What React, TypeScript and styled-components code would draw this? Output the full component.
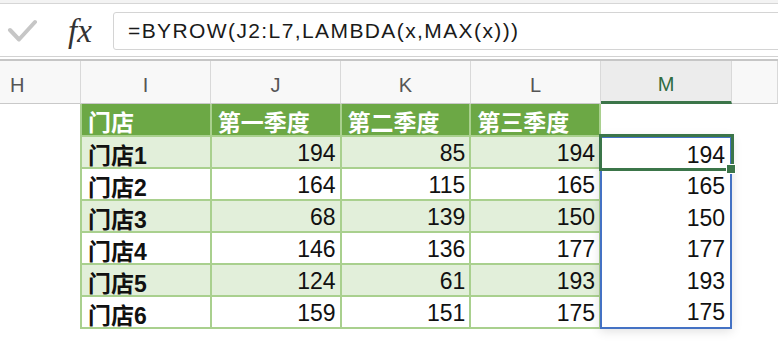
import React from "react";
import styled, { createGlobalStyle } from "styled-components";

const GlobalStyle = createGlobalStyle`
  html, body { margin: 0; padding: 0; background: #ffffff; }
  body { font-family: "Liberation Sans", "Noto Sans CJK SC", sans-serif; }
`;

const Page = styled.div`
  width: 778px;
  height: 362px;
  overflow: hidden;
  background: #ffffff;
`;

const TopStrip = styled.div`
  height: 3px;
  background: #f3f3f3;
  border-bottom: 1px solid #d6d6d6;
`;

const FormulaBar = styled.div`
  height: 52px;
  display: flex;
  align-items: flex-start;
  padding-top: 8px;
  box-sizing: border-box;
  background: #ffffff;
`;

const CheckButton = styled.div`
  width: 30px;
  height: 38px;
  margin-left: 7px;
  display: flex;
  align-items: center;
  justify-content: center;
`;

const FxLabel = styled.div`
  width: 45px;
  margin-left: 31px;
  height: 38px;
  display: flex;
  align-items: center;
  font-family: "Liberation Serif", "DejaVu Serif", serif;
  font-style: italic;
  font-size: 33px;
  color: #333333;
  letter-spacing: 0px;
`;

const FormulaInput = styled.div`
  flex: 1;
  height: 38px;
  margin-left: 0;
  margin-right: -10px;
  box-sizing: border-box;
  border: 1px solid #d4d4d4;
  border-radius: 3px;
  display: flex;
  align-items: center;
  padding-left: 14px;
  font-family: "Liberation Sans", "Noto Sans CJK SC", sans-serif;
  font-size: 21px;
  letter-spacing: 1.4px;
  color: #1a1a1a;
`;

const Divider = styled.div`
  height: 2px;
  border-top: 1px solid #d2d2d2;
  border-bottom: 2px solid #c6c6c6;
`;

const SheetGrid = styled.div`
  display: grid;
  grid-template-columns: 81px 130px 130px 130px 130px 131px 1fr;
  grid-template-rows: 43px auto;
`;

const ColHeader = styled.div<{ $active?: boolean; $align?: "left" | "center" }>`
  box-sizing: border-box;
  height: 43px;
  display: flex;
  align-items: center;
  justify-content: ${(p) => (p.$align === "left" ? "flex-start" : "center")};
  padding-left: ${(p) => (p.$align === "left" ? "10px" : "0")};
  padding-top: 7px;
  background: ${(p) => (p.$active ? "#ececec" : "#f8f8f8")};
  border-right: 1px solid #d9d9d9;
  border-bottom: ${(p) => (p.$active ? "3px solid #3b7549" : "1px solid #c9c9c9")};
  font-family: "Liberation Sans", sans-serif;
  font-size: 20px;
  color: ${(p) => (p.$active ? "#2f6b40" : "#555555")};
`;

const EmptyCell = styled.div``;

const DataTable = styled.div`
  grid-column: 2 / span 4;
  margin-left: -1px;
  display: grid;
  grid-template-columns: repeat(4, 1fr);
  grid-template-rows: 31px repeat(6, 30px);
  gap: 2px;
  padding: 0 2px 2px 2px;
  background: #a9d08e;
`;

const HeadCell = styled.div`
  background: #6ca845;
  color: #ffffff;
  font-weight: bold;
  font-size: 23px;
  display: flex;
  align-items: center;
  padding-left: 6px;
  padding-top: 2px;
  white-space: nowrap;
  overflow: hidden;
`;

const BodyCell = styled.div<{ $band: boolean; $num?: boolean }>`
  background: ${(p) => (p.$band ? "#e2efda" : "#ffffff")};
  color: #111111;
  font-size: 23px;
  font-weight: ${(p) => (p.$num ? "normal" : "bold")};
  display: flex;
  align-items: center;
  justify-content: ${(p) => (p.$num ? "flex-end" : "flex-start")};
  padding: 3px ${(p) => (p.$num ? "4px" : "0")} 0 ${(p) => (p.$num ? "0" : "6px")};
  white-space: nowrap;
`;

const MColumn = styled.div`
  margin-left: -1px;
  display: flex;
  flex-direction: column;
`;

const MTopSpacer = styled.div`
  height: 32px;
`;

const SpillBox = styled.div`
  position: relative;
  height: 193px;
  box-sizing: border-box;
  border: 2px solid #4472c4;
  box-shadow: 0 2px 10px rgba(0, 0, 0, 0.13);
  background: #ffffff;
  display: grid;
  grid-template-rows: repeat(6, 1fr);
`;

const SpillValue = styled.div`
  display: flex;
  align-items: center;
  justify-content: flex-end;
  padding-right: 5px;
  padding-top: 3px;
  font-size: 23px;
  color: #111111;
`;

const Selection = styled.div`
  position: absolute;
  left: -3px;
  top: -4px;
  width: 135px;
  height: 37px;
  box-sizing: border-box;
  border: 3px solid #3b7549;
  pointer-events: none;
`;

const FillHandle = styled.div`
  position: absolute;
  left: 124px;
  top: 26px;
  width: 10px;
  height: 10px;
  box-sizing: border-box;
  border: 1px solid #ffffff;
  background: #3b7549;
`;

const CheckIcon = () => (
  <svg width="30" height="24" viewBox="0 0 30 24">
    <path
      d="M3 11 L12 20.5 L28 3"
      fill="none"
      stroke="#c6c6c6"
      strokeWidth="4"
      strokeLinecap="round"
      strokeLinejoin="round"
    />
  </svg>
);

const rows = [
  ["门店1", 194, 85, 194],
  ["门店2", 164, 115, 165],
  ["门店3", 68, 139, 150],
  ["门店4", 146, 136, 177],
  ["门店5", 124, 61, 193],
  ["门店6", 159, 151, 175],
] as const;

const maxes = [194, 165, 150, 177, 193, 175];

export default function App() {
  return (
    <Page>
      <GlobalStyle />
      <TopStrip />
      <FormulaBar>
        <CheckButton>
          <CheckIcon />
        </CheckButton>
        <FxLabel>fx</FxLabel>
        <FormulaInput>=BYROW(J2:L7,LAMBDA(x,MAX(x)))</FormulaInput>
      </FormulaBar>
      <Divider />
      <SheetGrid>
        <ColHeader $align="left">H</ColHeader>
        <ColHeader>I</ColHeader>
        <ColHeader>J</ColHeader>
        <ColHeader>K</ColHeader>
        <ColHeader>L</ColHeader>
        <ColHeader $active>M</ColHeader>
        <ColHeader />

        <EmptyCell />
        <DataTable>
          <HeadCell>门店</HeadCell>
          <HeadCell>第一季度</HeadCell>
          <HeadCell>第二季度</HeadCell>
          <HeadCell>第三季度</HeadCell>
          {rows.map((r, i) => (
            <React.Fragment key={r[0]}>
              <BodyCell $band={i % 2 === 0}>{r[0]}</BodyCell>
              <BodyCell $band={i % 2 === 0} $num>{r[1]}</BodyCell>
              <BodyCell $band={i % 2 === 0} $num>{r[2]}</BodyCell>
              <BodyCell $band={i % 2 === 0} $num>{r[3]}</BodyCell>
            </React.Fragment>
          ))}
        </DataTable>
        <MColumn>
          <MTopSpacer />
          <SpillBox>
            {maxes.map((m, i) => (
              <SpillValue key={i}>{m}</SpillValue>
            ))}
            <Selection />
            <FillHandle />
          </SpillBox>
        </MColumn>
        <EmptyCell />
      </SheetGrid>
    </Page>
  );
}
